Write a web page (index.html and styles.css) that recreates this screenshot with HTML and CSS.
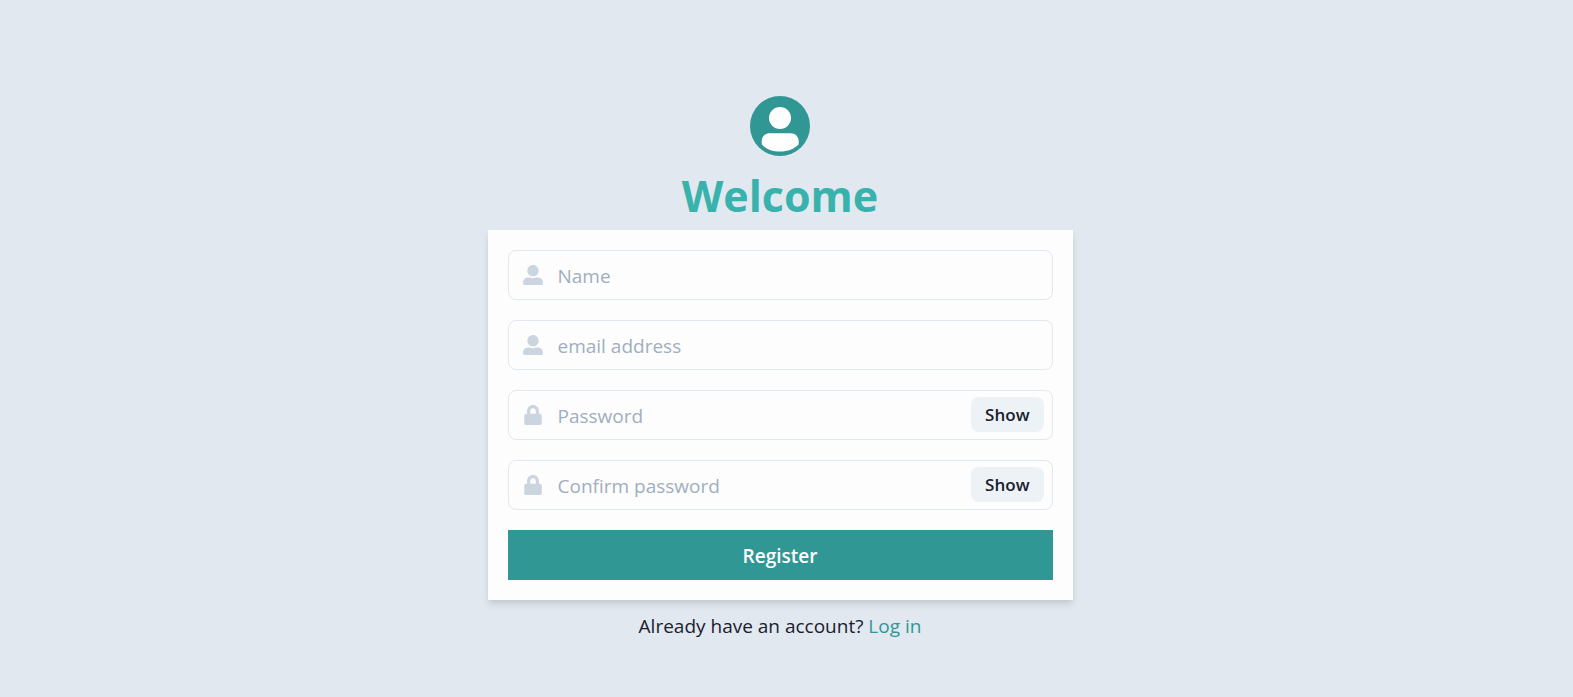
FILE: index.html
```html
<!DOCTYPE html>
<html lang="en">
<head>
<meta charset="utf-8">
<meta name="viewport" content="width=device-width, initial-scale=1">
<title>Register</title>
<link rel="stylesheet" href="styles.css">
</head>
<body>
<svg class="symbols" aria-hidden="true">
  <symbol id="icon-user" viewBox="0 0 512 512"><path d="M256 288c79.500 0 144-64.500 144-144S335.500 0 256 0 112 64.500 112 144s64.500 144 144 144zm128 32h-55.100c-22.200 10.200-46.900 16-72.900 16s-50.600-5.800-72.900-16H128C57.300 320 0 377.300 0 448v16c0 26.500 21.500 48 48 48h416c26.500 0 48-21.500 48-48v-16c0-70.700-57.300-128-128-128z"/></symbol>
  <symbol id="icon-lock" viewBox="0 0 448 512"><path d="M400 224h-24v-72C376 68.200 307.800 0 224 0S72 68.200 72 152v72H48c-26.500 0-48 21.500-48 48v192c0 26.500 21.500 48 48 48h352c26.500 0 48-21.500 48-48V272c0-26.500-21.500-48-48-48zm-104 0H152v-72c0-39.700 32.300-72 72-72s72 32.300 72 72v72z"/></symbol>
</svg>
<main class="page">
  <svg class="avatar" viewBox="0 0 60 60" aria-hidden="true">
    <circle cx="30" cy="30" r="30" fill="#319795"/>
    <circle cx="30" cy="22" r="11" fill="#fff"/>
    <path d="M19.500 37.200h21.300c4.500 0 7.900 3.400 7.900 7.900v3.200C44.500 53 37.500 55.600 30.200 55.600S15.900 53 11.700 48.300v-3.200c0-4.500 3.400-7.900 7.800-7.900z" fill="#fff"/>
  </svg>
  <h1 class="title">Welcome</h1>
  <form class="card">
    <label class="field">
      <svg class="icon" role="img" aria-label="Name"><use href="#icon-user"/></svg>
      <input class="input" type="text" placeholder="Name">
    </label>
    <label class="field">
      <svg class="icon" role="img" aria-label="Email address"><use href="#icon-user"/></svg>
      <input class="input" type="email" placeholder="email address">
    </label>
    <div class="field">
      <label class="icon-label" for="password"><svg class="icon" role="img" aria-label="Password"><use href="#icon-lock"/></svg></label>
      <input class="input" id="password" type="password" placeholder="Password">
      <button class="show" type="button">Show</button>
    </div>
    <div class="field">
      <label class="icon-label" for="confirm"><svg class="icon" role="img" aria-label="Confirm password"><use href="#icon-lock"/></svg></label>
      <input class="input" id="confirm" type="password" placeholder="Confirm password">
      <button class="show" type="button">Show</button>
    </div>
    <button class="submit" type="submit">Register</button>
  </form>
  <p class="login">Already have an account? <a class="link" href="#login">Log in</a></p>
</main>
</body>
</html>
```

FILE: styles.css
```css
*,
*::before,
*::after {
  box-sizing: border-box;
}

body {
  margin: 0;
  background: #e2e8f0;
  color: #1a202c;
  font: 19px/32px "Segoe UI", "Open Sans", "Noto Sans", sans-serif;
}

.symbols {
  display: none;
}

.page {
  display: flex;
  flex-direction: column;
  align-items: center;
  gap: 10px;
  min-height: 100vh;
  padding: 96px 13px 40px 0;
}

.avatar {
  width: 60px;
  height: 60px;
}

.title {
  margin: 0;
  padding-top: 6px;
  color: #38b2ac;
  font-size: 43px;
  font-weight: 700;
  line-height: 48px;
}

.card {
  display: flex;
  flex-direction: column;
  gap: 20px;
  width: 100%;
  max-width: 585px;
  padding: 20px;
  background: #fdfdfd;
  box-shadow: 0 5px 8px -1px rgba(0, 0, 0, 0.1), 0 3px 5px -1px rgba(0, 0, 0, 0.06);
}

.field {
  display: flex;
  align-items: center;
  min-height: 50px;
  padding: 0 8px 0 14px;
  border: 1px solid #e2e8f0;
  border-radius: 8px;
}

.field:focus-within {
  border-color: #319795;
}

.icon-label {
  display: flex;
}

.icon {
  flex: none;
  width: 20px;
  height: 20px;
  fill: #cbd5e0;
}

.input {
  flex: 1;
  min-width: 0;
  padding: 2px 0 0 15px;
  border: 0;
  outline: 0;
  background: transparent;
  color: inherit;
  font: inherit;
}

.input::placeholder {
  color: #a0aec0;
  opacity: 1;
}

.show {
  margin: 0 0 1px;
  padding: 0 14px;
  border: 0;
  border-radius: 8px;
  background: #edf2f7;
  color: #1a202c;
  font: inherit;
  font-size: 17px;
  font-weight: 600;
  line-height: 35px;
}

.submit {
  padding: 2px 0 0;
  border: 0;
  background: #319795;
  color: #fff;
  font: inherit;
  font-weight: 600;
  line-height: 48px;
}

.login {
  margin: 0;
}

.link {
  color: #319795;
  text-decoration: none;
}
```
